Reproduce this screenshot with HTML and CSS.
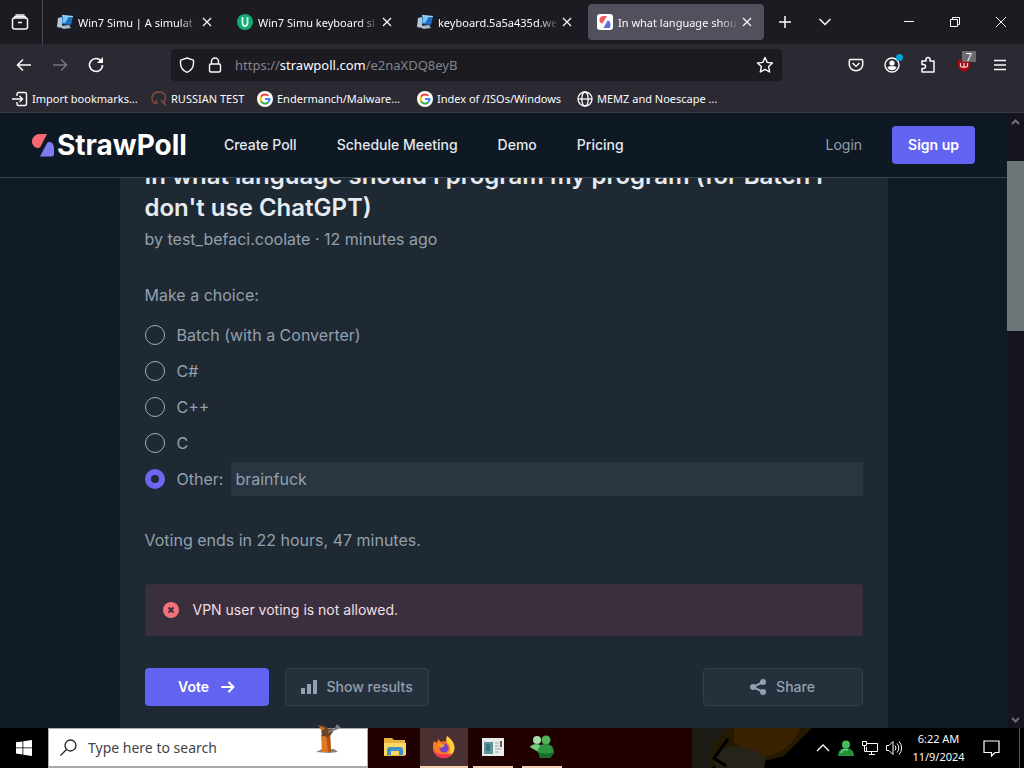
FILE: index.html
```html
<!DOCTYPE html>
<html lang="en">
<head>
    <meta charset="UTF-8">
    <meta name="viewport" content="width=device-width, initial-scale=1.0">
    <title>StrawPoll</title>
    <link rel="stylesheet" href="styles.css">
</head>
<body>
    <svg class="defs" aria-hidden="true">
        <defs>
            <symbol id="close" viewBox="0 0 16 16"><path d="M4 4l8 8M12 4l-8 8" fill="none" stroke="currentColor" stroke-width="1.2"/></symbol>
            <symbol id="win7" viewBox="0 0 16 16">
                <path d="M1 4l4-1v11l-5-1z" fill="#b5c8d8"/>
                <path d="M5 1l11 1-2 9-9-1z" fill="#1f6fc4"/>
                <path d="M6 2l6 .5L8 9H5.500z" fill="#79c8f2"/>
                <path d="M5 1l11 1-.3 1.300L5 2.200z" fill="#b9d9ee"/>
                <path d="M3 12l9-1 2 3-8 1z" fill="#a9bccb"/>
            </symbol>
            <symbol id="google" viewBox="0 0 16 16">
                <circle cx="8" cy="8" r="8" fill="#fff"/>
                <g fill="none" stroke-width="2">
                    <path d="M11.300 4.900A4.600 4.600 0 0 0 4 5.700" stroke="#ea4335"/>
                    <path d="M4 5.700a4.600 4.600 0 0 0 0 4.600" stroke="#fbbc05"/>
                    <path d="M4 10.300a4.600 4.600 0 0 0 7 1.200" stroke="#34a853"/>
                    <path d="M11 11.500A4.600 4.600 0 0 0 12.600 8H8" stroke="#4285f4"/>
                </g>
            </symbol>
            <symbol id="straw" viewBox="0 0 22 24">
                <path d="M15 1H7.500A7.500 7.500 0 0 0 0 8.500c0 3 2.500 6.500 6 6.500 1.500 0 2.200-.8 3-2.200z" fill="#f8686f"/>
                <path d="M8 23.500h12c1.300 0 2-1 2-2.500v-5.500C22 11.500 20 9 17.500 9c-1.500 0-2.200.6-3 2z" fill="#7c7cf2"/>
            </symbol>
        </defs>
    </svg>

    <div class="tab-bar">
        <button class="view-btn" aria-label="Recent browsing">
            <svg width="18" height="18" viewBox="0 0 18 18" fill="none" stroke="currentColor" stroke-width="1.5"><path d="M4.500 2h9"/><rect x="1.5" y="5" width="15" height="11" rx="2"/><path d="M3 5l1-1.500h10L15 5M7 9.500h4"/></svg>
        </button>
        <div class="tabs">
            <div class="tab">
                <svg class="fav"><use href="#win7"/></svg>
                <span class="tab-title">Win7 Simu | A simulat</span>
                <button class="tab-close" aria-label="Close tab"><svg><use href="#close"/></svg></button>
            </div>
            <div class="tab">
                <svg class="fav" viewBox="0 0 16 16"><circle cx="8" cy="8" r="8" fill="#13ab73"/><path d="M5.500 3v6a2.500 3 0 0 0 5 0V3" fill="none" stroke="#d8f6ea" stroke-width="1.8"/></svg>
                <span class="tab-title">Win7 Simu keyboard sl</span>
                <button class="tab-close" aria-label="Close tab"><svg><use href="#close"/></svg></button>
            </div>
            <div class="tab">
                <svg class="fav"><use href="#win7"/></svg>
                <span class="tab-title">keyboard.5a5a435d.we</span>
                <button class="tab-close" aria-label="Close tab"><svg><use href="#close"/></svg></button>
            </div>
            <div class="tab active">
                <svg class="fav" viewBox="0 0 16 16"><rect width="16" height="16" rx="3" fill="#fff"/><path d="M10 2H6a4 4 0 0 0-3.500 4c0 2 1 3.500 3 3.500z" fill="#ee5b60"/><path d="M6.500 14H12c1.500 0 1.500-1 1.500-3 0-2.500-1-4.500-3-4.500z" fill="#5f6fd6"/></svg>
                <span class="tab-title">In what language shou</span>
                <button class="tab-close" aria-label="Close tab"><svg><use href="#close"/></svg></button>
            </div>
        </div>
        <button class="bar-btn" aria-label="New tab"><svg width="16" height="16" viewBox="0 0 16 16" fill="none" stroke="currentColor" stroke-width="1.5"><path d="M8 2v12M2 8h12"/></svg></button>
        <button class="bar-btn" aria-label="List all tabs"><svg width="16" height="16" viewBox="0 0 16 16" fill="none" stroke="currentColor" stroke-width="1.5"><path d="M2.500 5L8 10.500 13.500 5"/></svg></button>
        <div class="window-controls">
            <button aria-label="Minimize"><svg width="12" height="12" viewBox="0 0 12 12" fill="none" stroke="currentColor"><path d="M1 5.500h10"/></svg></button>
            <button aria-label="Restore"><svg width="12" height="12" viewBox="0 0 12 12" fill="none" stroke="currentColor"><path d="M1.500 3.500h7v7h-7zM3.500 3.500v-2h7v7h-2"/></svg></button>
            <button aria-label="Close"><svg width="12" height="12" viewBox="0 0 12 12" fill="none" stroke="currentColor"><path d="M1 1l10 10M11 1L1 11"/></svg></button>
        </div>
    </div>

    <div class="toolbar">
        <button class="bar-btn" aria-label="Back"><svg width="16" height="16" viewBox="0 0 16 16" fill="none" stroke="currentColor" stroke-width="1.5"><path d="M15 8H2M7 2.500L1.500 8 7 13.500"/></svg></button>
        <button class="bar-btn" aria-label="Forward" disabled><svg width="16" height="16" viewBox="0 0 16 16" fill="none" stroke="currentColor" stroke-width="1.5"><path d="M1 8h13M9 2.500L14.500 8 9 13.500"/></svg></button>
        <button class="bar-btn" aria-label="Reload"><svg width="16" height="16" viewBox="0 0 16 16" fill="none" stroke="currentColor" stroke-width="1.6"><path d="M13.500 4.500A6.500 6.500 0 1 0 14.500 8"/><path d="M15 0v6H9z" fill="currentColor" stroke="none"/></svg></button>
        <div class="url-bar">
            <svg width="16" height="16" viewBox="0 0 16 16" fill="none" stroke="currentColor" stroke-width="1.4"><path d="M8 1l6.500 2.200v3C14.500 10.500 12 13.700 8 15.300 4 13.700 1.500 10.500 1.500 6.200v-3z"/></svg>
            <svg width="16" height="16" viewBox="0 0 16 16" fill="none" stroke="currentColor" stroke-width="1.4"><rect x="2.5" y="7" width="11" height="8" rx="1.5"/><path d="M4.500 7V4.500a3.500 3.500 0 0 1 7 0V7"/></svg>
            <span class="url">https://<b>strawpoll.com</b>/e2naXDQ8eyB</span>
            <button class="star" aria-label="Bookmark this page"><svg width="18" height="18" viewBox="0 0 18 18" fill="none" stroke="currentColor" stroke-width="1.4" stroke-linejoin="round"><path d="M9 1.500l2.200 4.900 5.300.6-3.900 3.600 1.100 5.400L9 13.300 4.300 16l1.100-5.400L1.500 7l5.300-.6z"/></svg></button>
        </div>
        <button class="bar-btn" aria-label="Pocket"><svg width="16" height="16" viewBox="0 0 16 16" fill="none" stroke="currentColor" stroke-width="1.5"><path d="M2.500 2.500h11a1.200 1.200 0 0 1 1.200 1.200v3.800a6.700 6.200 0 0 1-13.400 0V3.700a1.200 1.200 0 0 1 1.200-1.200z"/><path d="M4.500 6L8 9.300 11.500 6"/></svg></button>
        <button class="bar-btn" aria-label="Account"><svg width="16" height="16" viewBox="0 0 16 16" fill="none" stroke="currentColor" stroke-width="1.4"><circle cx="8" cy="8" r="7"/><circle cx="8" cy="6" r="2.6" fill="currentColor" stroke="none"/><path d="M3.500 11a4.500 2 0 0 1 9 0 5.500 5.500 0 0 1-9 0z" fill="currentColor" stroke="none"/></svg><span class="dot"></span></button>
        <button class="bar-btn" aria-label="Extensions"><svg width="16" height="18" viewBox="0 0 16 18" fill="none" stroke="currentColor" stroke-width="1.5" stroke-linejoin="round"><path d="M6 5V3.500a2 2 0 0 1 4 0V5h4v11H2v-3.500h1.500a2 2 0 0 0 0-4H2V5z"/></svg></button>
        <button class="bar-btn" aria-label="uBlock Origin"><svg width="16" height="16" viewBox="0 0 16 16"><path d="M8 1l6 2v5c0 3-2.500 5.500-6 7-3.500-1.500-6-4-6-7V3z" fill="#a90712"/><path d="M4.500 6v2.500a1.700 1.700 0 0 0 3.500 0V6v2.500a1.700 1.700 0 0 0 3.500 0V6" fill="none" stroke="#f3d5d7" stroke-width="1.2"/></svg><span class="badge">7</span></button>
        <button class="bar-btn" aria-label="Menu"><svg width="16" height="16" viewBox="0 0 16 16" fill="none" stroke="currentColor" stroke-width="1.5"><path d="M2 3.500h12M2 8h12M2 12.500h12"/></svg></button>
    </div>

    <div class="bookmarks">
        <a href="#"><svg viewBox="0 0 16 16" fill="none" stroke="currentColor" stroke-width="1.4"><path d="M5 5V3a1.500 1.500 0 0 1 1.500-1.500H13A1.500 1.500 0 0 1 14.500 3v10a1.500 1.500 0 0 1-1.500 1.500H6.500A1.500 1.500 0 0 1 5 13v-2M0 8h10M7.500 5l3 3-3 3"/></svg>Import bookmarks...</a>
        <a href="#"><svg viewBox="0 0 16 16" fill="none" stroke="#78483c" stroke-width="1.8"><path d="M6 13C2 12 .5 9 1.200 6 2 2.500 5 1 8 1c4 0 6.500 2.500 6.500 6 0 2-.8 3.500-2 4.500L15 15M6 13l-1-4M10 9l2.500 3"/></svg>RUSSIAN TEST</a>
        <a href="#"><svg><use href="#google"/></svg>Endermanch/Malware...</a>
        <a href="#"><svg><use href="#google"/></svg>Index of /ISOs/Windows</a>
        <a href="#"><svg viewBox="0 0 16 16" fill="none" stroke="currentColor" stroke-width="1.3"><circle cx="8" cy="8" r="7"/><ellipse cx="8" cy="8" rx="3.2" ry="7"/><path d="M1 8h14"/></svg>MEMZ and Noescape ...</a>
    </div>

    <div class="viewport">
        <div class="page">
            <header class="site-header">
                <a class="logo" href="#"><svg width="22" height="24"><use href="#straw"/></svg>StrawPoll</a>
                <nav class="site-nav">
                    <a href="#">Create Poll</a>
                    <a href="#">Schedule Meeting</a>
                    <a href="#">Demo</a>
                    <a href="#">Pricing</a>
                </nav>
                <a class="login" href="#">Login</a>
                <button class="btn btn-primary">Sign up</button>
            </header>

            <main class="card">
                <h1>In what language should I program my program (for Batch I don't use ChatGPT)</h1>
                <p class="byline">by test_befaci.coolate · 12 minutes ago</p>

                <form class="poll">
                    <p class="lead">Make a choice:</p>
                    <div class="option"><input type="radio" name="choice" id="c1"><label for="c1">Batch (with a Converter)</label></div>
                    <div class="option"><input type="radio" name="choice" id="c2"><label for="c2">C#</label></div>
                    <div class="option"><input type="radio" name="choice" id="c3"><label for="c3">C++</label></div>
                    <div class="option"><input type="radio" name="choice" id="c4"><label for="c4">C</label></div>
                    <div class="option"><input type="radio" name="choice" id="c5" checked><label for="c5">Other:</label><input type="text" class="other" aria-label="Other answer" value="brainfuck"></div>

                    <p class="ends">Voting ends in 22 hours, 47 minutes.</p>

                    <div class="alert">
                        <svg width="16" height="16" viewBox="0 0 16 16"><circle cx="8" cy="8" r="8" fill="#f3717a"/><path d="M5.500 5.500l5 5M10.500 5.500l-5 5" stroke="#3a2e3d" stroke-width="2"/></svg>
                        VPN user voting is not allowed.
                    </div>

                    <div class="actions">
                        <button type="button" class="btn btn-primary btn-vote">Vote <svg width="14" height="12" viewBox="0 0 14 12" fill="none" stroke="currentColor" stroke-width="2" stroke-linecap="round" stroke-linejoin="round"><path d="M1 6h11M8 1.500L12.500 6 8 10.500"/></svg></button>
                        <button type="button" class="btn btn-muted"><svg width="18" height="16" viewBox="0 0 18 16" fill="currentColor"><path d="M0 9h4v6H0zM6 5h4v10H6zM12 1h4v14h-4z"/></svg> Show results</button>
                        <button type="button" class="btn btn-muted btn-share"><svg width="18" height="18" viewBox="0 0 18 18" fill="currentColor"><path d="M13 4L3 9l10 5" fill="none" stroke="currentColor" stroke-width="2"/><circle cx="13" cy="4" r="3"/><circle cx="3" cy="9" r="3"/><circle cx="13" cy="14" r="3"/></svg> Share</button>
                    </div>
                </form>
            </main>
        </div>

        <div class="scrollbar">
            <svg width="9" height="6" viewBox="0 0 9 6"><path d="M1 5l3.500-3.500L8 5"/></svg>
            <div class="thumb"></div>
            <svg width="9" height="6" viewBox="0 0 9 6"><path d="M1 1l3.500 3.500L8 1"/></svg>
        </div>
    </div>

    <div class="taskbar">
        <button class="start" aria-label="Start"><svg width="16" height="16" viewBox="0 0 16 16" fill="#fff"><path d="M0 2.300l6.500-.9v6.100H0zM7.300 1.300L16 0v7.500H7.300zM0 8.300h6.500v6.200L0 13.600zM7.300 8.300H16V16l-8.700-1.300z"/></svg></button>
        <label class="search">
            <svg width="17" height="17" viewBox="0 0 17 17" fill="none" stroke="#222" stroke-width="1.3"><circle cx="10.5" cy="6.5" r="5.5"/><path d="M6.500 10.500l-6 6"/></svg>
            <input type="text" placeholder="Type here to search" aria-label="Search">
            <svg class="mascot" width="28" height="32" viewBox="0 0 28 32">
                <path d="M1 30l6-3h12l4 3-9 1z" fill="#8a8378"/>
                <path d="M6 13l9-2 1 19H7z" fill="#e07a22"/>
                <path d="M11 13l4-2 1 19h-3z" fill="#b55414"/>
                <path d="M2 3l8 1 4 3 3-1 1 4-4 5-7-1-1-7z" fill="#6d4426"/>
                <path d="M4 4l6 2-3 3z" fill="#d86f1e"/>
                <path d="M13 10l10-4" stroke="#777c85" stroke-width="2"/>
                <path d="M20 6l2-4 4 4z" fill="#777c85"/>
            </svg>
        </label>
        <div class="apps">
            <button aria-label="File Explorer"><svg width="22" height="20" viewBox="0 0 22 20"><path d="M0 1h8l2 2h11v16H0z" fill="#e9b13b"/><path d="M0 6h22v12H0z" fill="#fbd768"/><path d="M3 18v-5a3 3 0 0 1 3-3h10a3 3 0 0 1 3 3v5h-4v-4H7v4z" fill="#3f8fc9"/></svg></button>
            <button class="open current" aria-label="Firefox">
                <svg width="24" height="24" viewBox="0 0 24 24">
                    <path d="M2 6l3 2 1-4 3 3c2-1 4-1 5 0L15 1c2 1 4 4 5 6 3 4 3 9 0 12.500A11 11 0 0 1 12 23C6 23 1 19 1 13c0-3 0-5 1-7z" fill="#fb7a22"/>
                    <path d="M15 1c4 3 8 7 7.500 12.500C22 19 17 22 12 21c6-2 8-7 4-12-2-2-2-5-1-8z" fill="#ffcd35"/>
                    <path d="M1 13c1 4 4 6 8 6 4 1 8 0 11-1-2 3.500-5 5-8 5-6 0-11-4-11-10z" fill="#f5325b"/>
                    <circle cx="12" cy="13" r="4.5" fill="#7542c9"/>
                    <path d="M5 9c3-1 5 0 8 1-1 2-3 2-4 3-1-1-3-2-4-4z" fill="#ff9a26"/>
                </svg>
            </button>
            <button class="open" aria-label="Window"><svg width="22" height="18" viewBox="0 0 22 18"><rect width="22" height="18" fill="#e9ecea"/><path d="M2 4h9v12H2z" fill="#5d9497"/><path d="M4 6h4v7H4z" fill="#3b777d"/><path d="M13 5h4M13 8h4M13 11h6M13 14h4" stroke="#9ba3a5"/><path d="M19 3v6" stroke="#333" stroke-width="1.5"/></svg></button>
            <button class="open" aria-label="Messenger"><svg width="24" height="24" viewBox="0 0 24 24"><circle cx="7" cy="5" r="4" fill="#a9dcab"/><circle cx="16" cy="5" r="4.5" fill="#4fb25b"/><path d="M0 12c3-4 8-4 11-2 5-2 10-1 12 3l1 5-4 5H10l-2-6z" fill="#2f9440"/><path d="M0 12c3-3 7-3 10-1l-3 5z" fill="#7cca83"/><path d="M8 17c4 2 11 2 16 0l-4 6h-9z" fill="#176b2a"/></svg></button>
        </div>
        <svg class="wallpaper" width="178" height="40" viewBox="0 0 178 40" aria-hidden="true">
            <rect width="178" height="40" fill="#000"/>
            <path d="M0 0h120L92 28 60 36 0 40z" fill="#241a02"/>
            <path d="M42 0h66c-6 18-22 28-44 30L42 14z" fill="#3a2100"/>
            <path d="M0 0h36L20 18v22H0z" fill="#1b1a14"/>
            <path d="M24 24C36 16 58 16 74 30l-2 10H24z" fill="#25231a"/>
            <path d="M36 11L22 30l12 8" fill="none" stroke="#000" stroke-width="3"/>
        </svg>
        <div class="tray">
            <svg width="14" height="16" viewBox="0 0 14 16" fill="none" stroke="#fff" stroke-width="1.3"><path d="M1 11l6-6 6 6"/></svg>
            <svg width="16" height="16" viewBox="0 0 16 16"><circle cx="8" cy="4.5" r="4" fill="#46bd58"/><path d="M0 16c0-5 3-8 8-8s8 3 8 8z" fill="#22913a"/><path d="M3 13c1-3 4-4 7-3" fill="none" stroke="#72d67f" stroke-width="1.5"/></svg>
            <svg width="16" height="14" viewBox="0 0 16 14" fill="none" stroke="#fff"><path d="M5 2.500h10.500v8H4.500V6M7 13.500h6M9.500 10.500v3M.5.500h4v4h-4zM2.500 4.500v6h2"/></svg>
            <svg width="16" height="16" viewBox="0 0 16 16" fill="none" stroke="#fff"><path d="M.5 5.500h2.500l4-4v13l-4-4H.5zM9 5.500a4 4 0 0 1 0 5M11 3.500a6.500 6.500 0 0 1 0 9M13 1.500a9.500 9.500 0 0 1 0 13"/></svg>
        </div>
        <div class="clock">6:22 AM<br>11/9/2024</div>
        <button class="notify" aria-label="Notifications"><svg width="17" height="17" viewBox="0 0 17 17" fill="none" stroke="#fff" stroke-width="1.2"><path d="M1 1h15v11.500h-4L8.500 16V12.500H1z"/></svg></button>
        <div class="show-desktop"></div>
    </div>
</body>
</html>
```
FILE: styles.css
```css
* {
    margin: 0;
    padding: 0;
    box-sizing: border-box;
}

body {
    display: flex;
    flex-direction: column;
    height: 100vh;
    overflow: hidden;
    background: #2b2a33;
    color: #fbfbfe;
    font-family: "Noto Sans", "Open Sans", sans-serif;
    font-size: 11px;
}

button {
    border: none;
    background: none;
    color: inherit;
    font: inherit;
}

a {
    color: inherit;
    text-decoration: none;
}

svg {
    flex-shrink: 0;
}

.defs {
    position: absolute;
    width: 0;
    height: 0;
}

/* browser chrome */
.tab-bar {
    display: flex;
    align-items: center;
    height: 44px;
    background: #1c1b22;
    flex-shrink: 0;
}

.view-btn {
    display: grid;
    place-items: center;
    width: 43px;
    height: 44px;
    padding-right: 2px;
    border-right: 1px solid #4a4a55;
}

.tabs {
    display: flex;
    gap: 4px;
    padding: 0 1px 0 5px;
}

.tab {
    display: flex;
    align-items: center;
    width: 176px;
    height: 36px;
    padding: 0 9px;
    border-radius: 4px;
}

.tab.active {
    background: #52505d;
}

.fav {
    width: 16px;
    height: 16px;
    margin-right: 5px;
}

.tab-title {
    flex: 1;
    min-width: 0;
    overflow: hidden;
    white-space: nowrap;
    mask-image: linear-gradient(to left, transparent, #000 20px);
}

.tab-close,
.tab-close svg {
    display: block;
    width: 16px;
    height: 16px;
}

.bar-btn {
    position: relative;
    display: grid;
    place-items: center;
    width: 36px;
    height: 36px;
}

.tab-bar > .bar-btn {
    width: 40px;
}

.bar-btn:disabled {
    color: #75747c;
}

.window-controls {
    display: flex;
    margin-left: auto;
}

.window-controls button {
    display: grid;
    place-items: center;
    width: 46px;
    height: 44px;
}

.toolbar {
    display: flex;
    align-items: center;
    height: 41px;
    padding: 0 6px;
    flex-shrink: 0;
}

.url-bar {
    display: flex;
    flex: 1;
    align-items: center;
    gap: 12px;
    height: 32px;
    margin: 0 56px 0 57px;
    padding: 0 8px;
    background: #1c1b22;
    border-radius: 4px;
}

.url {
    flex: 1;
    color: #85848c;
    font-size: 13px;
}

.url b {
    color: #fbfbfe;
    font-weight: normal;
}

.star {
    display: grid;
}

.dot {
    position: absolute;
    top: 7px;
    right: 7px;
    width: 7px;
    height: 7px;
    border-radius: 50%;
    background: #00a5e0;
}

.badge {
    position: absolute;
    top: 4px;
    right: 6px;
    width: 14px;
    background: #6b6b70;
    line-height: 11px;
}

.bookmarks {
    display: grid;
    grid-template-columns: 139px 106px 160px 160px auto;
    align-items: center;
    height: 28px;
    padding-left: 12px;
    border-bottom: 1px solid #3c3b44;
    flex-shrink: 0;
}

.bookmarks a {
    display: flex;
    align-items: center;
    gap: 4px;
    white-space: nowrap;
}

.bookmarks svg {
    width: 16px;
    height: 16px;
}

/* site */
.viewport {
    display: flex;
    flex: 1;
    min-height: 0;
    background: #0f1a25;
    color: #94a0ae;
    font-family: Inter, sans-serif;
    font-size: 16px;
    line-height: 24px;
}

.page {
    flex: 1;
    overflow: hidden;
}

.site-header {
    position: relative;
    z-index: 1;
    display: flex;
    align-items: center;
    height: 65px;
    padding: 0 32px;
    background: #0f1924;
    border-bottom: 1px solid #384652;
    font-size: 14px;
}

.logo {
    display: flex;
    align-items: center;
    gap: 3px;
    color: #fff;
    font-size: 28px;
    font-weight: 700;
}

.site-nav {
    display: flex;
    gap: 40px;
    margin-left: 37px;
    color: #e3e8ee;
    font-weight: 500;
}

.login {
    margin: 0 30px 0 auto;
}

.btn {
    display: flex;
    align-items: center;
    justify-content: center;
    gap: 8px;
    height: 38px;
    padding: 0 16px;
    border-radius: 4px;
    font-size: 14px;
    font-weight: 500;
}

.btn-primary {
    background: #6263f0;
    color: #fff;
    font-weight: 600;
}

.btn-muted {
    background: #24303c;
    border: 1px solid #33404c;
    padding: 0 15px;
}

.card {
    max-width: 768px;
    min-height: 100%;
    margin: -42px auto 0;
    padding: 24px 25px;
    background: #1e2933;
}

h1 {
    color: #e6ebf1;
    font-size: 24px;
    font-weight: 600;
    line-height: 32px;
}

.byline {
    margin-top: 3px;
}

.lead {
    margin: 32px 0 10px;
}

.option {
    display: flex;
    align-items: center;
    height: 36px;
}

.option input[type="radio"] {
    appearance: none;
    width: 20px;
    height: 20px;
    margin-right: 12px;
    border: 1px solid #a3adb8;
    border-radius: 50%;
}

.option input[type="radio"]:checked {
    border: 6px solid #6d66f0;
}

.other {
    flex: 1;
    height: 34px;
    margin-left: 8px;
    padding: 0 4px;
    border: none;
    background: #293540;
    color: #94a0ae;
    font: inherit;
}

.ends {
    margin: 31px 0 32px;
}

.alert {
    display: flex;
    align-items: center;
    gap: 14px;
    height: 52px;
    padding: 0 18px;
    background: #3a303d;
    border-radius: 4px;
    color: #f3dfe3;
    font-size: 14px;
}

.actions {
    display: flex;
    gap: 16px;
    margin-top: 32px;
}

.btn-vote {
    gap: 12px;
    width: 124px;
}

.btn-share {
    width: 160px;
    margin-left: auto;
}

.scrollbar {
    display: flex;
    flex-direction: column;
    align-items: center;
    width: 17px;
    padding: 6px 0 5px;
    background: #15151d;
}

.scrollbar svg {
    fill: none;
    stroke: #70707a;
    stroke-width: 2;
}

.thumb {
    width: 100%;
    height: 170px;
    margin: 36px 0 auto;
    background: #6c7678;
}

/* taskbar */
.taskbar {
    display: flex;
    align-items: center;
    height: 40px;
    background: #000;
    flex-shrink: 0;
}

.start {
    width: 48px;
    height: 40px;
    display: grid;
    place-items: center;
}

.search {
    position: relative;
    display: flex;
    align-items: center;
    gap: 11px;
    width: 320px;
    height: 40px;
    padding: 0 11px;
    background: #fff;
    border: 1px solid #aaa;
    border-bottom-width: 2px;
}

.search input {
    flex: 1;
    min-width: 0;
    border: none;
    background: none;
    font-family: inherit;
    font-size: 14px;
}

.search input::placeholder {
    color: #444;
}

.mascot {
    position: absolute;
    top: -7px;
    right: 24px;
}

.apps {
    display: flex;
    flex: 1;
    gap: 1px;
    height: 40px;
    padding-left: 3px;
    background: #210000;
}

.apps button {
    display: grid;
    place-items: center;
    width: 40px;
    margin: 0 4px;
    border-bottom: 2px solid transparent;
}

.apps .open {
    border-color: #f3cfae;
}

.apps .current {
    width: 48px;
    margin: 0;
    background: #4a3033;
}

.tray {
    display: flex;
    align-items: center;
    gap: 8px;
    margin-left: -54px;
}

.clock {
    width: 73px;
    text-align: center;
    line-height: 18px;
}

.notify {
    display: grid;
    place-items: center;
    width: 32px;
    height: 40px;
}

.show-desktop {
    width: 5px;
    height: 40px;
    margin-left: 12px;
    border-left: 1px solid #555;
}
```
